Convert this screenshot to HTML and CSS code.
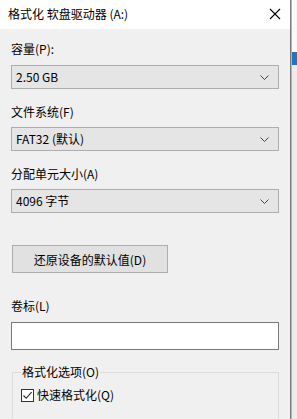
FILE: index.html
```html
<!DOCTYPE html>
<html lang="zh-CN">
<head>
  <meta charset="UTF-8">
  <meta name="viewport" content="width=device-width, initial-scale=1.0">
  <title>格式化 软盘驱动器 (A:)</title>
  <link rel="stylesheet" href="styles.css">
</head>
<body>
  <div class="screen">
    <div class="dialog">
      <div class="titlebar">
        <span class="title">格式化 软盘驱动器 (A:)</span>
        <svg class="close" width="12" height="12" viewBox="0 0 12 12">
          <path d="M1 1 L11 11 M11 1 L1 11" stroke="#000" stroke-width="1.1" fill="none"/>
        </svg>
      </div>

      <div class="content">
        <div class="label label-first">容量(P):</div>
        <div class="combo">
          <span>2.50 GB</span>
          <svg class="chevron" width="9" height="5" viewBox="0 0 9 5"><path d="M0.5 0.5 L4.5 4.5 L8.5 0.5" stroke="#444" fill="none"/></svg>
        </div>

        <div class="label">文件系统(F)</div>
        <div class="combo">
          <span>FAT32 (默认)</span>
          <svg class="chevron" width="9" height="5" viewBox="0 0 9 5"><path d="M0.5 0.5 L4.5 4.5 L8.5 0.5" stroke="#444" fill="none"/></svg>
        </div>

        <div class="label">分配单元大小(A)</div>
        <div class="combo">
          <span>4096 字节</span>
          <svg class="chevron" width="9" height="5" viewBox="0 0 9 5"><path d="M0.5 0.5 L4.5 4.5 L8.5 0.5" stroke="#444" fill="none"/></svg>
        </div>

        <button class="restore">还原设备的默认值(D)</button>

        <div class="label label-volume">卷标(L)</div>
        <div class="textbox"></div>

        <fieldset class="options">
          <legend>格式化选项(O)</legend>
          <label class="check">
            <span class="box">
              <svg width="11" height="11" viewBox="0 0 11 11"><path d="M1.5 5.5 L4.2 8.3 L9.6 2.2" stroke="#222" stroke-width="1.1" fill="none"/></svg>
            </span>
            快速格式化(Q)
          </label>
        </fieldset>
      </div>
    </div>
    <div class="outside">
      <div class="out-top"></div>
      <div class="out-blue"></div>
      <div class="out-rest"></div>
    </div>
  </div>
</body>
</html>
```

FILE: styles.css
```css
body {
  margin: 0;
  font-family: "Noto Sans CJK SC", "Noto Sans", sans-serif;
  font-size: 12px;
  color: #000;
  overflow: hidden;
}
.screen {
  display: flex;
  height: 419px;
}
.dialog {
  width: 290px;
  background: #f0f0f0;
  border-right: 1px solid #7a7a7a;
  display: flex;
  flex-direction: column;
  overflow: hidden;
}
.titlebar {
  height: 29px;
  flex-shrink: 0;
  background: #fff;
  display: flex;
  align-items: center;
  justify-content: space-between;
  padding: 0 9px 0 8px;
}
.title {
  line-height: 16px;
  margin-top: -1px;
}
.close {
  margin-top: -1px;
}
.content {
  padding: 12px 11px 0 11px;
  display: flex;
  flex-direction: column;
}
.label {
  line-height: 16px;
  margin: 15px 0 7px 0;
}
.label-first {
  margin-top: 0;
  margin-bottom: 8px;
}
.combo {
  height: 24px;
  box-sizing: border-box;
  background: #e5e5e5;
  border: 1px solid #adadad;
  display: flex;
  align-items: center;
  justify-content: space-between;
  padding: 0 9px 0 4px;
}
.combo span {
  line-height: 16px;
}
.restore {
  align-self: flex-start;
  margin: 32px 0 0 1px;
  width: 156px;
  height: 28px;
  background: #e1e1e1;
  border: 1px solid #adadad;
  font-family: inherit;
  font-size: 12px;
  color: #000;
  padding: 0;
}
.label-volume {
  margin-top: 25px;
  margin-bottom: 8px;
}
.textbox {
  height: 28px;
  box-sizing: border-box;
  background: #fff;
  border: 1px solid #7a7a7a;
}
.options {
  margin: 15px 0 0 1px;
  border: 1px solid #dcdcdc;
  padding: 8px 8px 40px 8px;
  min-width: 0;
}
.options legend {
  padding: 0 1px;
  margin-left: 0;
  line-height: 14px;
}
.check {
  display: flex;
  align-items: center;
  gap: 3px;
  line-height: 16px;
}
.box {
  width: 13px;
  height: 13px;
  box-sizing: border-box;
  border: 1px solid #333;
  background: #fff;
  display: flex;
  align-items: center;
  justify-content: center;
}
.outside {
  flex: 1;
  display: flex;
  flex-direction: column;
  border-left: 1px solid #b4b4b4;
}
.out-top {
  height: 52px;
  background: #fafafa;
}
.out-blue {
  height: 13px;
  background: #1d76bf;
}
.out-rest {
  flex: 1;
  background: #ececec;
}
```
